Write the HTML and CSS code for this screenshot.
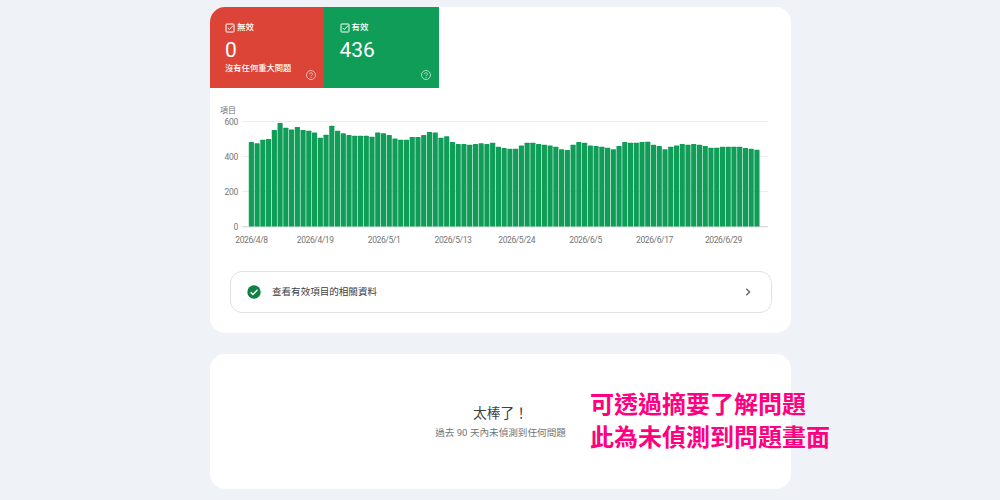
FILE: index.html
```
<!DOCTYPE html>
<html lang="zh-Hant">
<head>
    <meta charset="UTF-8">
    <meta name="viewport" content="width=device-width, initial-scale=1.0">
    <title>項目報表</title>
    <link rel="stylesheet" href="styles.css">
</head>
<body>
    <main class="page">
        <section class="card report">
            <div class="tiles">
                <div class="tile tile-invalid">
                    <div class="tile-label">
                        <svg class="checkbox" viewBox="0 0 10 10"><rect x="1" y="1" width="8" height="8" rx="0.6"/><path d="M2.7 4.9l1.6 1.6 3.9-4"/></svg>
                        <span>無效</span>
                    </div>
                    <div class="tile-count">0</div>
                    <div class="tile-note">沒有任何重大問題</div>
                    <svg class="help" viewBox="0 0 10 10"><circle cx="5" cy="5" r="4.5"/><path d="M3.6 4.1a1.4 1.4 0 1 1 2.2 1.1Q5 5.6 5 6.2M5 7v.9"/></svg>
                </div>
                <div class="tile tile-valid">
                    <div class="tile-label">
                        <svg class="checkbox" viewBox="0 0 10 10"><rect x="1" y="1" width="8" height="8" rx="0.6"/><path d="M2.7 4.9l1.6 1.6 3.9-4"/></svg>
                        <span>有效</span>
                    </div>
                    <div class="tile-count">436</div>
                    <svg class="help" viewBox="0 0 10 10"><circle cx="5" cy="5" r="4.5"/><path d="M3.6 4.1a1.4 1.4 0 1 1 2.2 1.1Q5 5.6 5 6.2M5 7v.9"/></svg>
                </div>
            </div>

            <div class="chart">
                <div class="chart-title">項目</div>
                <div class="chart-body">
                    <div class="y-axis">
                        <span>600</span>
                        <span>400</span>
                        <span>200</span>
                        <span>0</span>
                    </div>
                    <svg class="plot" id="plot" viewBox="0 0 526 107">
                        <path class="grid" d="M0 .5H526M0 35.5H526M0 70.5H526"/>
                        <path class="baseline" d="M0 105.8H526"/>
                    </svg>
                </div>
                <div class="x-axis">
                    <span>2026/4/8</span>
                    <span class="near">2026/4/19</span>
                    <span>2026/5/1</span>
                    <span>2026/5/13</span>
                    <span class="near">2026/5/24</span>
                    <span>2026/6/5</span>
                    <span>2026/6/17</span>
                    <span>2026/6/29</span>
                </div>
            </div>

            <div class="details">
                <svg class="done" viewBox="0 0 14 14"><circle cx="7" cy="7" r="6.7"/><path d="M3.6 7.2l2.3 2.3 4.6-4.7"/></svg>
                <span class="details-text">查看有效項目的相關資料</span>
                <svg class="chevron" viewBox="0 0 6 8"><path d="M1.3 0.8L4.6 4 1.3 7.2"/></svg>
            </div>
        </section>

        <section class="card empty">
            <h2>太棒了！</h2>
            <p>過去 90 天內未偵測到任何問題</p>
        </section>
    </main>

    <div class="note">可透過摘要了解問題<br>此為未偵測到問題畫面</div>

    <script src="chart.js"></script>
</body>
</html>
```

FILE: styles.css
```
body {
    margin: 0;
    height: 500px;
    overflow: hidden;
    background-color: #eff3f8;
    color: #3c4043;
    font-family: Roboto, "Noto Sans CJK TC", sans-serif;
}
.page {
    width: 581px;
    margin-left: 210px;
    padding-top: 7px;
}
.card {
    box-sizing: border-box;
    background: white;
    border-radius: 15px;
    overflow: hidden;
}
.report {
    height: 326px;
}
.tiles {
    display: grid;
    grid-template-columns: 114px 115px;
    height: 81px;
}
.tile {
    position: relative;
    padding: 13px 0 0 15px;
    color: white;
}
.tile-invalid {
    background: #db4437;
}
.tile-valid {
    padding-left: 15.5px;
    background: #0f9d58;
}
.tile-label {
    display: flex;
    align-items: center;
    gap: 2px;
    height: 15px;
    line-height: 13px;
    font-size: 8.5px;
    font-weight: 500;
}
.tile svg {
    fill: none;
    stroke: white;
}
.checkbox {
    width: 10px;
    height: 10px;
}
.tile-count {
    height: 26px;
    line-height: 30px;
    font-size: 21px;
}
.tile-note {
    height: 13px;
    line-height: 14px;
    font-size: 8.3px;
    font-weight: 500;
    white-space: nowrap;
}
.help {
    position: absolute;
    right: 8px;
    bottom: 8px;
    width: 10px;
    height: 10px;
    stroke-width: 0.8;
    opacity: 0.8;
}
.chart {
    height: 183px;
    padding: 16px 23px 0 10px;
    box-sizing: border-box;
    color: #757575;
    font-size: 8px;
}
.chart-title {
    height: 13px;
    line-height: 13px;
}
.chart-body {
    display: flex;
    height: 110px;
}
.y-axis {
    display: flex;
    flex-direction: column;
    justify-content: space-between;
    width: 18px;
    height: 115px;
    margin-right: 4px;
    line-height: 10px;
    text-align: right;
    font-size: 8.5px;
    letter-spacing: -0.3px;
}
.plot {
    width: 526px;
    height: 107px;
    margin-top: 4px;
}
.grid {
    stroke: #ececec;
}
.baseline {
    stroke: #cfcfcf;
}
.bar {
    fill: #0f9d58;
}
.x-axis {
    display: flex;
    margin-top: 6px;
    margin-left: 6.5px;
    line-height: 14px;
    font-size: 8.5px;
    letter-spacing: -0.4px;
    text-align: center;
}
.x-axis span {
    flex: none;
    width: 50px;
    margin-right: 18.9px;
}
/* labels that are 11 days after the previous one instead of 12 */
.x-axis .near {
    margin-left: -5.2px;
}
.details {
    display: flex;
    align-items: center;
    box-sizing: border-box;
    width: 542px;
    height: 42px;
    margin-left: 20px;
    padding: 0 20px 0 16px;
    border: 1px solid #dfe1e5;
    border-radius: 12px;
}
.done {
    width: 14px;
    height: 14px;
    margin-right: 11px;
    fill: #108043;
}
.done path {
    fill: none;
    stroke: white;
    stroke-width: 1.4;
}
.details-text {
    flex: 1;
    padding-bottom: 2px;
    font-size: 9.55px;
}
.chevron {
    width: 6px;
    height: 8px;
    fill: none;
    stroke: #5f6368;
    stroke-width: 1.3;
}
.empty {
    height: 135px;
    margin-top: 21px;
    padding-top: 49px;
    text-align: center;
}
.empty h2 {
    margin: 0;
    line-height: 21px;
    font-size: 13.8px;
    font-weight: 400;
}
.empty p {
    margin: 1px 0 0;
    line-height: 15px;
    color: #757575;
    font-size: 9.6px;
}
.note {
    position: absolute;
    left: 590px;
    top: 386px;
    color: #ff0080;
    font-family: "Noto Sans CJK TC", sans-serif;
    font-size: 24px;
    font-weight: 700;
    line-height: 33px;
    white-space: nowrap;
}
```

FILE: chart.js
```
// valid items per day, 2026/4/8 - 2026/7/5
const items = [
    480, 473, 494, 498, 549, 589, 562, 551, 566, 549, 545, 534, 505, 522, 573,
    545, 530, 520, 516, 516, 516, 511, 534, 530, 520, 501, 494, 494, 509, 509,
    520, 537, 534, 505, 513, 480, 469, 469, 465, 469, 473, 469, 477, 454, 446,
    442, 442, 461, 477, 477, 469, 465, 461, 454, 439, 435, 465, 480, 477, 461,
    458, 454, 448, 440, 458, 480, 477, 477, 480, 482, 465, 458, 440, 454, 461,
    469, 465, 469, 465, 458, 448, 448, 454, 454, 454, 454, 446, 442, 436
];
const max = 600;
const plotHeight = 105.5;
const step = 5.745;
const plot = document.getElementById('plot');

items.forEach((count, i) => {
    const height = count / max * plotHeight;
    const bar = document.createElementNS('http://www.w3.org/2000/svg', 'rect');
    bar.setAttribute('class', 'bar');
    bar.setAttribute('x', 6.8 + i * step);
    bar.setAttribute('y', plotHeight - height);
    bar.setAttribute('width', 5.15);
    bar.setAttribute('height', height);
    bar.setAttribute('rx', 0.6);
    plot.appendChild(bar);
});
```
